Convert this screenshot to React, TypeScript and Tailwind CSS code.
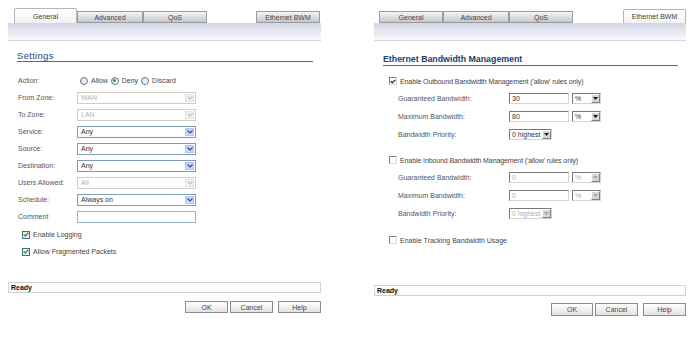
import React from "react";

const font = { fontFamily: '"Liberation Sans", Arial, sans-serif' };

function TabActive({ label, w, h }: { label: string; w: string; h: string }) {
  return (
    <div
      className={`${w} ${h} border border-b-0 border-[#b5b5b5] rounded-t-[2px] bg-gradient-to-b from-white to-[#f1f1f1] flex items-center justify-center text-[7px] text-[#444] leading-none`}
    >
      {label}
    </div>
  );
}

function TabInactive({ label, w }: { label: string; w: string }) {
  return (
    <div
      className={`${w} h-[12px] border border-[#9c9c9c] bg-gradient-to-b from-[#f5f5f5] to-[#c6c7cf] flex items-center justify-center text-[7px] text-[#444] leading-none`}
    >
      {label}
    </div>
  );
}

function XpChevron({ disabled }: { disabled?: boolean }) {
  return (
    <svg width="6" height="4" viewBox="0 0 6 4">
      <path d="M0.5 0.5 L3 3 L5.5 0.5" fill="none" stroke={disabled ? "#c3c3bb" : "#2a4a9a"} strokeWidth="1.1" />
    </svg>
  );
}

function XpSelect({ value, disabled }: { value: string; disabled?: boolean }) {
  return (
    <div
      className={`w-[119px] h-[12px] flex items-stretch border ${
        disabled ? "border-[#cfcec4] bg-white" : "border-[#7f9db9] bg-white"
      }`}
    >
      <div className={`flex-1 flex items-center pl-[3px] text-[7px] leading-none ${disabled ? "text-[#b5b3a8]" : "text-[#333]"}`}>
        {value}
      </div>
      <div
        className={`w-[9px] m-[1px] flex items-center justify-center ${
          disabled ? "bg-[#f3f3ef] border border-[#e2e1da]" : "bg-[#c8d7f7] border border-[#b3c6ee]"
        }`}
      >
        <XpChevron disabled={disabled} />
      </div>
    </div>
  );
}

function XpRadio({ checked }: { checked?: boolean }) {
  return (
    <div className="w-[8px] h-[8px] rounded-full border border-[#5a7696] bg-gradient-to-br from-[#dcdcd6] to-white flex items-center justify-center">
      {checked && <div className="w-[3px] h-[3px] rounded-full bg-[#2aa22a]" />}
    </div>
  );
}

function XpCheck() {
  return (
    <div className="w-[8px] h-[8px] border border-[#4a6a8e] bg-[#eef0ea] flex items-center justify-center">
      <svg width="6" height="5" viewBox="0 0 6 5">
        <path d="M0.7 2.4 L2.3 4 L5.3 0.8" fill="none" stroke="#22a022" strokeWidth="1.3" />
      </svg>
    </div>
  );
}

function ClassicCheck({ checked }: { checked?: boolean }) {
  return (
    <div className="w-[8px] h-[8px] border border-t-[#808080] border-l-[#808080] border-b-[#d8d8d8] border-r-[#d8d8d8] bg-white flex items-center justify-center">
      {checked && (
        <svg width="6" height="5" viewBox="0 0 6 5">
          <path d="M0.7 2.2 L2.3 3.8 L5.3 0.8" fill="none" stroke="#222" strokeWidth="1.2" />
        </svg>
      )}
    </div>
  );
}

function ClassicInput({ value, disabled }: { value: string; disabled?: boolean }) {
  return (
    <div className="w-[60px] h-[11px] border border-t-[#7a7a7a] border-l-[#7a7a7a] border-b-[#d4d4d4] border-r-[#d4d4d4] bg-white flex items-center pl-[2px]">
      <span className={`text-[7px] leading-none ${disabled ? "text-[#b0b0b0]" : "text-[#333]"}`}>{value}</span>
    </div>
  );
}

function ClassicSelect({ value, w, disabled }: { value: string; w: string; disabled?: boolean }) {
  return (
    <div className={`${w} h-[11px] border border-t-[#7a7a7a] border-l-[#7a7a7a] border-b-[#d4d4d4] border-r-[#d4d4d4] bg-white flex items-stretch`}>
      <div className={`flex-1 flex items-center pl-[2px] text-[7px] leading-none ${disabled ? "text-[#b0b0b0]" : "text-[#333]"}`}>
        {value}
      </div>
      <div className="w-[9px] bg-[#d8d6d0] border border-t-white border-l-white border-b-[#808080] border-r-[#808080] flex items-center justify-center">
        <svg width="5" height="3" viewBox="0 0 5 3">
          <path d="M0 0 H5 L2.5 3 Z" fill={disabled ? "#a8a8a8" : "#111"} />
        </svg>
      </div>
    </div>
  );
}

function Btn({ label, w, h, cls = "" }: { label: string; w: string; h: string; cls?: string }) {
  return (
    <div
      className={`${w} ${h} ${cls} border border-[#8c8c8c] bg-gradient-to-b from-white to-[#e2e2e2] flex items-center justify-center text-[7px] text-[#444] leading-none`}
    >
      {label}
    </div>
  );
}

function Row({ label, children }: { label: string; children: React.ReactNode }) {
  return (
    <div className="h-[17px] flex items-center">
      <div className="w-[59px] ml-[10px] text-[7px] text-[#555] leading-none">{label}</div>
      {children}
    </div>
  );
}

function LeftPanel() {
  return (
    <div className="w-[350px] h-full pl-[8px]">
      <div className="w-[313px] flex flex-col">
        <div className="mt-[8px] h-[15px] flex items-end pl-[6px]">
          <TabActive label="General" w="w-[63px]" h="h-[15px]" />
          <TabInactive label="Advanced" w="w-[66px]" />
          <TabInactive label="QoS" w="w-[64px]" />
          <div className="ml-auto mr-[1px]">
            <TabInactive label="Ethernet BWM" w="w-[64px]" />
          </div>
        </div>
        <div className="h-[18px] bg-gradient-to-b from-[#d2d5e5] to-[#fafafc] border-b border-[#d6d6d6]" />
        <div className="ml-[9px] w-[296px] mt-[10px] border-b border-[#666] pb-[1px]">
          <div className="text-[9.5px] leading-[9px] text-[#2a4674] font-medium tracking-[0.3px]">Settings</div>
        </div>
        <div className="mt-[10px] flex flex-col">
          <Row label="Action:">
            <div className="flex items-center text-[7px] text-[#444] leading-none">
              <div className="ml-[3px]"><XpRadio /></div>
              <span className="ml-[3px]">Allow</span>
              <div className="ml-[3px]"><XpRadio checked /></div>
              <span className="ml-[3px]">Deny</span>
              <div className="ml-[3px]"><XpRadio /></div>
              <span className="ml-[3px]">Discard</span>
            </div>
          </Row>
          <Row label="From Zone:"><XpSelect value="WAN" disabled /></Row>
          <Row label="To Zone:"><XpSelect value="LAN" disabled /></Row>
          <Row label="Service:"><XpSelect value="Any" /></Row>
          <Row label="Source:"><XpSelect value="Any" /></Row>
          <Row label="Destination:"><XpSelect value="Any" /></Row>
          <Row label="Users Allowed:"><XpSelect value="All" disabled /></Row>
          <Row label="Schedule:"><XpSelect value="Always on" /></Row>
          <Row label="Comment">
            <div className="w-[119px] h-[12px] border border-[#9fb4c8] bg-white" />
          </Row>
          <div className="mt-[1px] h-[17px] flex items-center ml-[14px]">
            <XpCheck />
            <span className="ml-[3px] text-[7px] text-[#444] leading-none">Enable Logging</span>
          </div>
          <div className="h-[17px] flex items-center ml-[14px]">
            <XpCheck />
            <span className="ml-[3px] text-[7px] text-[#444] leading-none">Allow Fragmented Packets</span>
          </div>
        </div>
        <div className="mt-[22px] h-[11px] border border-[#d2d2d2] bg-[#fefefa] flex items-center pl-[2px]">
          <span className="text-[7px] font-bold text-[#111] leading-none">Ready</span>
        </div>
        <div className="mt-[8px] flex justify-end">
          <Btn label="OK" w="w-[43px]" h="h-[12px]" />
          <Btn label="Cancel" w="w-[43px]" h="h-[12px]" cls="ml-[2px]" />
          <Btn label="Help" w="w-[43px]" h="h-[12px]" cls="ml-[5px]" />
        </div>
      </div>
    </div>
  );
}

function BwRow({ label, children }: { label: string; children: React.ReactNode }) {
  return (
    <div className="h-[18px] flex items-center">
      <div className="w-[111px] ml-[24px] text-[7px] text-[#555] leading-none">{label}</div>
      {children}
    </div>
  );
}

function BwBlock({ disabled }: { disabled?: boolean }) {
  return (
    <>
      <BwRow label="Guaranteed Bandwidth:">
        <ClassicInput value={disabled ? "0" : "30"} disabled={disabled} />
        <div className="ml-[3px]"><ClassicSelect value="%" w="w-[29px]" disabled={disabled} /></div>
      </BwRow>
      <BwRow label="Maximum Bandwidth:">
        <ClassicInput value={disabled ? "0" : "80"} disabled={disabled} />
        <div className="ml-[3px]"><ClassicSelect value="%" w="w-[29px]" disabled={disabled} /></div>
      </BwRow>
      <BwRow label="Bandwidth Priority:">
        <ClassicSelect value="0 highest" w="w-[43px]" disabled={disabled} />
      </BwRow>
    </>
  );
}

function RightPanel() {
  return (
    <div className="w-[350px] h-full pl-[24px]">
      <div className="w-[312px] flex flex-col">
        <div className="mt-[9px] h-[14px] flex items-end pl-[5px]">
          <TabInactive label="General" w="w-[64px]" />
          <TabInactive label="Advanced" w="w-[66px]" />
          <TabInactive label="QoS" w="w-[64px]" />
          <div className="ml-auto">
            <TabActive label="Ethernet BWM" w="w-[63px]" h="h-[14px]" />
          </div>
        </div>
        <div className="h-[18px] bg-gradient-to-b from-[#d2d5e5] to-[#fafafc] border-b border-[#d6d6d6]" />
        <div className="ml-[9px] w-[295px] mt-[14px] border-b border-[#666] pb-[1px]">
          <div className="text-[8.8px] leading-[9px] text-[#22406e] font-bold">Ethernet Bandwidth Management</div>
        </div>
        <div className="mt-[7px] h-[16px] flex items-center ml-[15px]">
          <ClassicCheck checked />
          <span className="ml-[3px] text-[7px] text-[#444] leading-none tracking-[-0.1px]">Enable Outbound Bandwidth Management ('allow' rules only)</span>
        </div>
        <BwBlock />
        <div className="mt-[9px] h-[16px] flex items-center ml-[15px]">
          <ClassicCheck />
          <span className="ml-[3px] text-[7px] text-[#444] leading-none tracking-[-0.1px]">Enable Inbound Bandwidth Management ('allow' rules only)</span>
        </div>
        <BwBlock disabled />
        <div className="mt-[10px] h-[16px] flex items-center ml-[15px]">
          <ClassicCheck />
          <span className="ml-[3px] text-[7px] text-[#444] leading-none">Enable Tracking Bandwidth Usage</span>
        </div>
        <div className="mt-[37px] h-[11px] border border-[#d2d2d2] bg-[#fefefa] flex items-center pl-[2px]">
          <span className="text-[7px] font-bold text-[#111] leading-none">Ready</span>
        </div>
        <div className="mt-[7px] flex justify-end">
          <Btn label="OK" w="w-[42px]" h="h-[13px]" />
          <Btn label="Cancel" w="w-[43px]" h="h-[13px]" cls="ml-[2px]" />
          <Btn label="Help" w="w-[43px]" h="h-[13px]" cls="ml-[5px]" />
        </div>
      </div>
    </div>
  );
}

export default function App() {
  return (
    <div className="w-[700px] h-[337px] bg-white flex overflow-hidden" style={font}>
      <LeftPanel />
      <RightPanel />
    </div>
  );
}
